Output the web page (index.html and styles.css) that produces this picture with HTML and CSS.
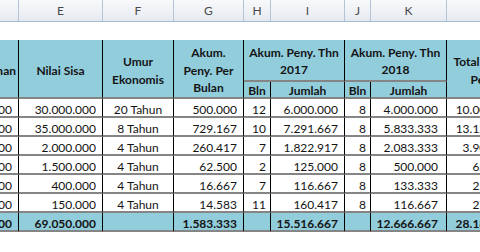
FILE: index.html
```html
<!DOCTYPE html>
<html lang="id">
<head>
<meta charset="utf-8">
<title>Penyusutan</title>
<link rel="stylesheet" href="styles.css">
</head>
<body>
<div class="colhead">
  <div class="ch c-d">D</div>
  <div class="ch c-e">E</div>
  <div class="ch c-f">F</div>
  <div class="ch c-g">G</div>
  <div class="ch c-h">H</div>
  <div class="ch c-i">I</div>
  <div class="ch c-j">J</div>
  <div class="ch c-k">K</div>
  <div class="ch c-l">L</div>
</div>
<div class="blank-row"></div>
<div class="sheet">
  <div class="hd span2 r-right">Harga Perolehan</div>
  <div class="hd span2">Nilai Sisa</div>
  <div class="hd span2">Umur<br>Ekonomis</div>
  <div class="hd span2">Akum.<br>Peny. Per<br>Bulan</div>
  <div class="hd grp">Akum. Peny. Thn<br>2017</div>
  <div class="hd grp">Akum. Peny. Thn<br>2018</div>
  <div class="hd span2">Total Akum.<br>Peny.</div>
  <div class="hd sub">Bln</div>
  <div class="hd sub">Jumlah</div>
  <div class="hd sub">Bln</div>
  <div class="hd sub">Jumlah</div>

  <div class="cell num">150.000.000</div><div class="cell num">30.000.000</div><div class="cell mid">20 Tahun</div><div class="cell num">500.000</div><div class="cell bln">12</div><div class="cell num">6.000.000</div><div class="cell bln">8</div><div class="cell num k">4.000.000</div><div class="cell num">10.000.000</div>

  <div class="cell num">105.000.000</div><div class="cell num">35.000.000</div><div class="cell mid">8 Tahun</div><div class="cell num">729.167</div><div class="cell bln">10</div><div class="cell num">7.291.667</div><div class="cell bln">8</div><div class="cell num k">5.833.333</div><div class="cell num">13.125.000</div>

  <div class="cell num">14.500.000</div><div class="cell num">2.000.000</div><div class="cell mid">4 Tahun</div><div class="cell num">260.417</div><div class="cell bln">7</div><div class="cell num">1.822.917</div><div class="cell bln">8</div><div class="cell num k">2.083.333</div><div class="cell num">3.906.250</div>

  <div class="cell num">4.500.000</div><div class="cell num">1.500.000</div><div class="cell mid">4 Tahun</div><div class="cell num">62.500</div><div class="cell bln">2</div><div class="cell num">125.000</div><div class="cell bln">8</div><div class="cell num k">500.000</div><div class="cell num">625.000</div>

  <div class="cell num">1.200.000</div><div class="cell num">400.000</div><div class="cell mid">4 Tahun</div><div class="cell num">16.667</div><div class="cell bln">7</div><div class="cell num">116.667</div><div class="cell bln">8</div><div class="cell num k">133.333</div><div class="cell num">250.000</div>

  <div class="cell num">850.000</div><div class="cell num">150.000</div><div class="cell mid">4 Tahun</div><div class="cell num">14.583</div><div class="cell bln">11</div><div class="cell num">160.417</div><div class="cell bln">8</div><div class="cell num k">116.667</div><div class="cell num">277.083</div>

  <div class="cell num tot">276.050.000</div><div class="cell num tot">69.050.000</div><div class="cell tot"></div><div class="cell num tot">1.583.333</div><div class="cell tot"></div><div class="cell num tot">15.516.667</div><div class="cell tot"></div><div class="cell num k tot">12.666.667</div><div class="cell num tot">28.183.333</div>
</div>
</body>
</html>
```

FILE: styles.css
```css
html, body {
  margin: 0;
  padding: 0;
  background: #ffffff;
}
body {
  width: 480px;
  height: 252px;
  overflow: hidden;
  font-family: Lato, "Liberation Sans", sans-serif;
  color: #141414;
}

/* Excel column letters */
.colhead {
  display: grid;
  grid-template-columns: 19px 84px 71px 70px 27px 74px 26px 76px 77px;
  height: 22px;
  width: 524px;
  box-sizing: border-box;
  background: linear-gradient(#f8f9fb, #e6eaf0);
  border-bottom: 1px solid #a9bccf;
}
.ch {
  box-sizing: border-box;
  border-right: 1px solid #b4c4d6;
  text-align: center;
  font-size: 12px;
  line-height: 21px;
  color: #4a4a4a;
  overflow: hidden;
}
.c-d { color: transparent; }

.blank-row {
  height: 18px;
}

/* sheet grid */
.sheet {
  display: grid;
  grid-template-columns: 19px 84px 71px 70px 27px 74px 26px 76px 77px;
  grid-template-rows: 42px 17px repeat(7, 19px);
  width: 524px;
}
.hd, .cell {
  box-sizing: border-box;
  border-right: 1px solid #000;
  border-bottom: 2px solid #858585;
  overflow: hidden;
  white-space: nowrap;
}
.hd {
  background: #92cddc;
  font-weight: 700;
  font-size: 12px;
  line-height: 17.5px;
  text-align: center;
  display: flex;
  flex-direction: column;
  justify-content: center;
  align-items: center;
  padding-top: 4px;
}
.span2 {
  grid-row: span 2;
}
.grp {
  grid-column: span 2;
  padding-top: 2px;
}
.r-right {
  align-items: flex-end;
  padding-right: 2px;
}
.sub {
  justify-content: flex-end;
  line-height: 12px;
  padding-top: 0;
}

.cell {
  font-size: 12px;
  line-height: 12px;
  display: flex;
  align-items: flex-end;
}
.num {
  justify-content: flex-end;
  padding-right: 6px;
}
.num.k {
  padding-right: 8px;
}
.bln {
  justify-content: flex-end;
  padding-right: 4px;
}
.mid {
  justify-content: center;
}
.tot {
  background: #92cddc;
  font-weight: 700;
}
```
